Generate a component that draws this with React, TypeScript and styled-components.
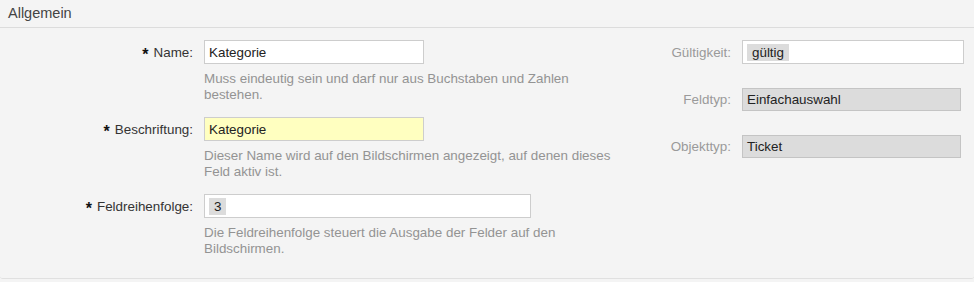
import React, { FunctionComponent } from 'react';
import styled, { createGlobalStyle } from 'styled-components';

const Global = createGlobalStyle`
  html, body {
    margin: 0;
    padding: 0;
    background: #f4f4f4;
    font-family: "Liberation Sans", Arial, sans-serif;
    font-size: 13.4px;
    color: #333;
  }
`;

const S = {
  Widget: styled.div`
    width: 974px;
    height: 279px;
    box-sizing: border-box;
    background: #f4f4f4;
    border-bottom: 1px solid #e0e0e0;
    border-radius: 0 0 3px 3px;
  `,

  Header: styled.div`
    height: 28px;
    box-sizing: border-box;
    padding: 5px 8px 0;
    font-size: 14.5px;
    color: #444;
    border-bottom: 1px solid #dcdcdc;
  `,

  Body: styled.div`
    display: flex;
    padding-top: 12px;
  `,

  LeftColumn: styled.div`
    width: 620px;
    display: flex;
    flex-direction: column;
  `,

  RightColumn: styled.div`
    flex: 1;
    display: flex;
    flex-direction: column;
    gap: 23px;
  `,

  Field: styled.div`
    display: grid;
    grid-template-columns: 193px 1fr;
    column-gap: 11px;
    margin-bottom: 14px;
  `,

  RightField: styled.div`
    display: grid;
    grid-template-columns: 111px 1fr;
    column-gap: 11px;
    align-items: center;
  `,
};

const Label = styled.label<{ $muted?: boolean }>`
  display: flex;
  align-items: center;
  justify-content: flex-end;
  height: 24px;
  color: ${(p) => (p.$muted ? '#9a9a9a' : '#333')};
  white-space: nowrap;
`;

const Star = styled.span`
  font-weight: bold;
  font-size: 16px;
  margin-right: 5px;
  position: relative;
  top: 3px;
  color: #111;
`;

const Input = styled.div<{ $width: number; $highlight?: boolean; $readonly?: boolean }>`
  width: ${(p) => p.$width}px;
  height: ${(p) => (p.$readonly ? 23 : 24)}px;
  box-sizing: border-box;
  display: flex;
  align-items: center;
  padding: 0 4px;
  border: 1px solid ${(p) => (p.$readonly ? '#c4c4c4' : '#cdcdcd')};
  background: ${(p) => (p.$readonly ? '#dcdcdc' : p.$highlight ? '#ffffc0' : '#fff')};
  color: #222;
`;

const Chip = styled.span`
  background: #dcdcdc;
  padding: 1px 5px;
  line-height: 15px;
`;

const Help = styled.div`
  grid-column: 2;
  max-width: 415px;
  margin-top: 7px;
  line-height: 16px;
  color: #939393;
`;

const Allgemein: FunctionComponent = () => (
  <S.Widget>
    <Global />
    <S.Header>Allgemein</S.Header>
    <S.Body>
      <S.LeftColumn>
        <S.Field>
          <Label><Star>*</Star>Name:</Label>
          <Input $width={220}>Kategorie</Input>
          <Help>Muss eindeutig sein und darf nur aus Buchstaben und Zahlen bestehen.</Help>
        </S.Field>
        <S.Field>
          <Label><Star>*</Star>Beschriftung:</Label>
          <Input $width={220} $highlight>Kategorie</Input>
          <Help>Dieser Name wird auf den Bildschirmen angezeigt, auf denen dieses Feld aktiv ist.</Help>
        </S.Field>
        <S.Field>
          <Label><Star>*</Star>Feldreihenfolge:</Label>
          <Input $width={327}><Chip>3</Chip></Input>
          <Help>Die Feldreihenfolge steuert die Ausgabe der Felder auf den Bildschirmen.</Help>
        </S.Field>
      </S.LeftColumn>
      <S.RightColumn>
        <S.RightField>
          <Label $muted>Gültigkeit:</Label>
          <Input $width={222}><Chip>gültig</Chip></Input>
        </S.RightField>
        <S.RightField>
          <Label $muted>Feldtyp:</Label>
          <Input $width={219} $readonly>Einfachauswahl</Input>
        </S.RightField>
        <S.RightField>
          <Label $muted>Objekttyp:</Label>
          <Input $width={219} $readonly>Ticket</Input>
        </S.RightField>
      </S.RightColumn>
    </S.Body>
  </S.Widget>
);

export default Allgemein;
